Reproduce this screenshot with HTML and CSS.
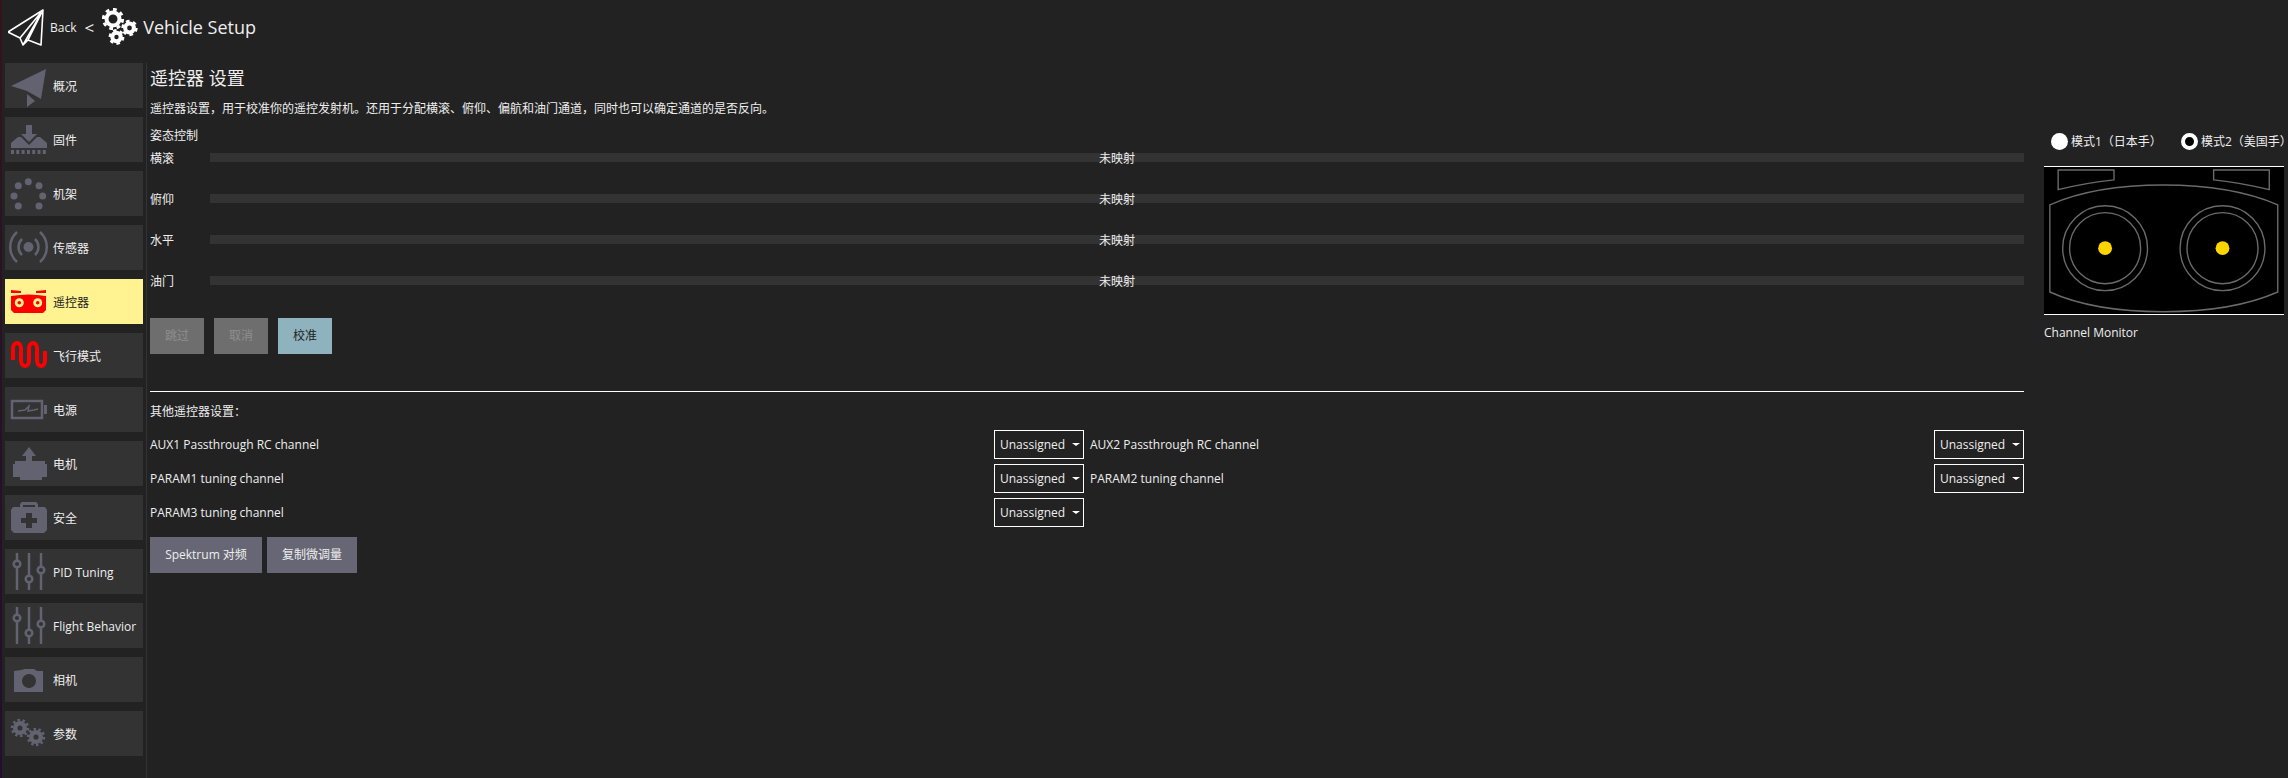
FILE: index.html
```html
<!DOCTYPE html>
<html lang="zh">
<head>
<meta charset="utf-8">
<title>Vehicle Setup</title>
<link rel="stylesheet" href="styles.css">
</head>
<body>
<div class="shell">
  <header class="topbar">
    <svg class="back-plane" viewBox="0 0 40 40"><path class="outline" d="M35 1 0 23l12 6 3 7 5-5 13 5ZM12 29 35 1 15 36M20 31 35 1"/></svg>
    <span class="back">Back</span>
    <span class="crumb">&lt;</span>
    <svg class="gears" viewBox="0 0 38 38">
      <g class="gear-white">
        <circle class="ring" cx="11" cy="11" r="6.5"/><circle class="teeth" cx="11" cy="11" r="9.6" pathLength="32"/>
        <circle class="ring" cx="27.5" cy="20" r="4.4"/><circle class="teeth small" cx="27.5" cy="20" r="7" pathLength="24"/>
        <circle class="ring" cx="14.5" cy="29" r="4.2"/><circle class="teeth small" cx="14.5" cy="29" r="6.7" pathLength="24"/>
      </g>
    </svg>
    <span class="page-title">Vehicle Setup</span>
  </header>
  <div class="body">
    <nav class="sidebar">
      <a class="nav-item"><svg class="nav-icon" viewBox="0 0 40 45"><path class="fill" d="M41 6 6 23l16 5 14 8Z"/><path class="fill" d="M22 31v13l8-6Z"/></svg><span>概况</span></a>
      <a class="nav-item"><svg class="nav-icon" viewBox="0 0 40 45"><path class="fill" d="M21 8h6v9h5l-8 8-8-8h5Z"/><path class="fill" d="M6 31v-5l7-6h3l8 8 8-8h3l7 6v5Z"/><path class="dots" d="M6 35h36"/></svg><span>固件</span></a>
      <a class="nav-item"><svg class="nav-icon" viewBox="0 0 40 45"><g class="fill"><circle cx="23.3" cy="10.7" r="3.5"/><circle cx="13.3" cy="14.7" r="3.5"/><circle cx="34" cy="14.7" r="3.5"/><circle cx="9" cy="25" r="3.5"/><circle cx="37.7" cy="25" r="3.5"/><circle cx="13.3" cy="35" r="3.5"/><circle cx="34" cy="35" r="3.5"/></g></svg><span>机架</span></a>
      <a class="nav-item"><svg class="nav-icon" viewBox="0 0 40 45"><circle class="fill" cx="23.5" cy="22" r="5"/><path class="line" d="M17 14a11 11 0 0 0 0 16M30 14a11 11 0 0 1 0 16M12 7a20 20 0 0 0 0 30M35 7a20 20 0 0 1 0 30"/></svg><span>传感器</span></a>
      <a class="nav-item active"><svg class="nav-icon" viewBox="0 0 40 45"><path class="red" d="M6 11l10 1v2H6ZM31 12l10-1v3H31Z"/><path class="red" d="M6 17q18-3 35 0v14l-3 3H9l-3-3Z"/><circle class="eye" cx="14.300" cy="23.700" r="4.500"/><circle class="red" cx="14.300" cy="23.700" r="1.800"/><circle class="eye" cx="32.700" cy="23.700" r="4.500"/><circle class="red" cx="32.700" cy="23.700" r="1.800"/></svg><span>遥控器</span></a>
      <a class="nav-item"><svg class="nav-icon" viewBox="0 0 40 45"><path class="wave" d="M8 27V16c0-8 8-8 8 0v11c0 8 8 8 8 0V16c0-8 8-8 8 0v11c0 8 8 8 8 0v-9"/></svg><span>飞行模式</span></a>
      <a class="nav-item"><svg class="nav-icon" viewBox="0 0 40 45"><path class="line" d="M7 14h30v17H7Z"/><path class="fill" d="M39 18h3v9h-3Z"/><path class="thin" d="M13 24l7-1 4-4-1 5 6-1 4-1"/></svg><span>电源</span></a>
      <a class="nav-item"><svg class="nav-icon" viewBox="0 0 40 45"><path class="fill" d="M24 6l7 9h-4v5h13v3h2v13h-5v3H15v-3H8V23h2v-3h11v-5h-4Z"/></svg><span>电机</span></a>
      <a class="nav-item"><svg class="nav-icon" viewBox="0 0 40 45"><path class="fill" fill-rule="evenodd" d="M15 12V9l2-2h14l2 2v3h7l2 3v20l-3 3H9l-3-3V15l2-3Zm3 0h12V10H18Zm3 6v5h-5v5h5v5h6v-5h5v-5h-5v-5Z"/></svg><span>安全</span></a>
      <a class="nav-item"><svg class="nav-icon" viewBox="0 0 40 45"><path class="line" d="M12 4v37M24 4v37M36 4v37"/><g class="knob"><circle cx="12" cy="15" r="3.300"/><circle cx="24" cy="30" r="3.300"/><circle cx="36" cy="21" r="3.300"/></g></svg><span>PID Tuning</span></a>
      <a class="nav-item"><svg class="nav-icon" viewBox="0 0 40 45"><path class="line" d="M12 4v37M24 4v37M36 4v37"/><g class="knob"><circle cx="12" cy="15" r="3.300"/><circle cx="24" cy="30" r="3.300"/><circle cx="36" cy="21" r="3.300"/></g></svg><span>Flight Behavior</span></a>
      <a class="nav-item"><svg class="nav-icon" viewBox="0 0 40 45"><path class="fill" fill-rule="evenodd" d="M9 14l7-1 4-1h9l3 2h6v21H9Zm15 3a7 7 0 1 0 .01 0Z"/></svg><span>相机</span></a>
      <a class="nav-item"><svg class="nav-icon" viewBox="0 0 40 45"><circle class="gear-ring" cx="15" cy="17" r="4.800"/><circle class="gear-teeth" cx="15" cy="17" r="8" pathLength="40"/><circle class="gear-ring" cx="31" cy="26" r="4.800"/><circle class="gear-teeth" cx="31" cy="26" r="8" pathLength="40"/></svg><span>参数</span></a>
    </nav>
    <main class="main">
      <h1 class="heading">遥控器 设置</h1>
      <p class="intro">遥控器设置，用于校准你的遥控发射机。还用于分配横滚、俯仰、偏航和油门通道，同时也可以确定通道的是否反向。</p>
      <p class="group-label">姿态控制</p>
      <div class="bars">
        <div class="bar-row"><span class="bar-label">横滚</span><div class="bar">未映射</div></div>
        <div class="bar-row"><span class="bar-label">俯仰</span><div class="bar">未映射</div></div>
        <div class="bar-row"><span class="bar-label">水平</span><div class="bar">未映射</div></div>
        <div class="bar-row"><span class="bar-label">油门</span><div class="bar">未映射</div></div>
      </div>
      <div class="cal-actions">
        <button class="btn disabled">跳过</button>
        <button class="btn disabled">取消</button>
        <button class="btn primary">校准</button>
      </div>
      <hr class="rule">
      <p class="other-label">其他遥控器设置：</p>
      <div class="options">
        <div class="option"><span>AUX1 Passthrough RC channel</span><div class="select">Unassigned<i class="caret"></i></div></div>
        <div class="option"><span>AUX2 Passthrough RC channel</span><div class="select">Unassigned<i class="caret"></i></div></div>
        <div class="option"><span>PARAM1 tuning channel</span><div class="select">Unassigned<i class="caret"></i></div></div>
        <div class="option"><span>PARAM2 tuning channel</span><div class="select">Unassigned<i class="caret"></i></div></div>
        <div class="option"><span>PARAM3 tuning channel</span><div class="select">Unassigned<i class="caret"></i></div></div>
      </div>
      <div class="extra-actions">
        <button class="btn secondary wide">Spektrum 对频</button>
        <button class="btn secondary narrow">复制微调量</button>
      </div>
    </main>
    <aside class="monitor">
      <div class="modes">
        <label class="mode"><i class="radio"></i>模式1（日本手）</label>
        <label class="mode"><i class="radio checked"></i>模式2（美国手）</label>
      </div>
      <svg class="sticks" viewBox="0 0 240 149">
        <path class="stick-line" d="M12.700 3H69.300V13Q40 16 12.700 23ZM226.700 3H170.300V13Q199 16 226.700 23ZM4.300 38.300Q50 18.300 119.300 18.300T235.300 38.300V126.700Q190 146.700 119.300 146.700T4.300 126.700Z"/>
        <circle class="stick-line" cx="60.300" cy="82.300" r="43"/><circle class="stick-line" cx="60.300" cy="82.300" r="36"/>
        <circle class="stick-line" cx="179.300" cy="82.300" r="43"/><circle class="stick-line" cx="179.300" cy="82.300" r="36"/>
        <circle class="stick-dot" cx="60.300" cy="82.300" r="7"/><circle class="stick-dot" cx="179.300" cy="82.300" r="7"/>
      </svg>
      <p class="monitor-label">Channel Monitor</p>
    </aside>
  </div>
</div>
</body>
</html>
```

FILE: styles.css
```css
* { box-sizing: border-box; }
html, body { margin: 0; height: 100%; }
body {
  background: #222;
  color: #eee;
  font: 12px/16px "Open Sans", "Noto Sans CJK SC", sans-serif;
  overflow: hidden;
}
.shell {
  height: 778px;
  border-left: 2px solid;
  border-image: linear-gradient(#33141a, #261029 60%, #240e30) 1;
  display: flex;
  flex-direction: column;
}
.topbar { height: 63px; display: flex; align-items: flex-start; }
.back-plane { width: 40px; height: 40px; margin: 9px 0 0 6px; flex: none; }
.outline { fill: none; stroke: #fff; stroke-width: 1.6; stroke-linejoin: round; }
.back { margin: 20px 0 0 2px; }
.crumb { margin: 17px 0 0 8px; font-size: 17px; line-height: 22px; }
.gears { width: 38px; height: 38px; margin: 8px 0 0 8px; flex: none; }
.ring { fill: none; stroke: #fff; stroke-width: 4; }
.teeth { fill: none; stroke: #fff; stroke-width: 3; stroke-dasharray: 2 2; }
.teeth.small { stroke-dasharray: 2 2; stroke-width: 2.4; }
.page-title { margin: 15px 0 0 3px; font-size: 18px; line-height: 25px; }
.body { flex: 1; display: flex; min-height: 0; }
.sidebar {
  width: 144px;
  padding-left: 3px;
  flex: none;
  display: flex;
  flex-direction: column;
  gap: 9px;
}
.nav-item {
  width: 138px;
  height: 45px;
  flex: none;
  background: #333;
  display: flex;
  align-items: center;
  color: #eee;
}
.nav-item span { position: relative; left: 8px; top: 1px; }
.nav-item.active { background: #fff291; color: #222; }
.nav-icon { width: 40px; height: 45px; flex: none; overflow: visible; }
.fill { fill: #626270; }
.line { fill: none; stroke: #626270; stroke-width: 2.500; }
.thin { fill: none; stroke: #626270; stroke-width: 1.500; }
.dots { fill: none; stroke: #626270; stroke-width: 4; stroke-dasharray: 3 2.300; }
.knob circle { fill: #333; stroke: #626270; stroke-width: 2.500; }
.red { fill: #f00; }
.eye { fill: #fff291; }
.wave { fill: none; stroke: #f00; stroke-width: 4; }
.gear-ring { fill: none; stroke: #626270; stroke-width: 4.500; }
.gear-teeth { fill: none; stroke: #626270; stroke-width: 2.500; stroke-dasharray: 2 2; }
.main {
  width: 1878px;
  flex: none;
  border-left: 1px solid #333;
  padding-left: 3px;
}
.heading { margin: 5px 0 0; font-size: 18px; line-height: 20px; font-weight: 400; }
.intro { margin: 13px 0 0; }
.group-label { margin: 11px 0 0; }
.bars { margin-top: 8px; display: flex; flex-direction: column; gap: 24px; }
.bar-row { display: flex; align-items: flex-start; height: 17px; }
.bar-label { width: 60px; flex: none; line-height: 14px; }
.bar {
  flex: 1;
  height: 9px;
  margin-top: 1px;
  background: #333;
  text-align: center;
  line-height: 11px;
}
.cal-actions { display: flex; gap: 10px; margin-top: 26px; }
.btn {
  height: 36px;
  width: 54px;
  border: 0;
  padding: 0;
  font: inherit;
  color: #eee;
}
.btn.disabled { background: #6e6e6e; color: #8f8f8f; }
.btn.primary { background: #8fb3be; color: #222; }
.btn.secondary { background: #666674; }
.btn.wide { width: 112px; }
.btn.narrow { width: 90px; }
.rule { margin: 37px 0 0; border: 0; height: 1px; background: #fff; }
.other-label { margin: 12px 0 0; }
.options {
  margin-top: 10px;
  display: grid;
  grid-template-columns: 934px 934px;
  column-gap: 6px;
  row-gap: 5px;
}
.option { display: flex; justify-content: space-between; align-items: center; height: 29px; }
.select {
  width: 90px;
  height: 29px;
  border: 1px solid #fff;
  display: flex;
  align-items: center;
  padding-left: 5px;
  gap: 7px;
}
.caret {
  width: 0;
  height: 0;
  border: 3px solid transparent;
  border-top: 3px solid #fff;
  border-bottom: 0;
  border-left-width: 4px;
  border-right-width: 4px;
}
.extra-actions { display: flex; gap: 5px; margin-top: 10px; }
.monitor { margin-left: 20px; width: 244px; flex: none; }
.modes { display: flex; gap: 26px; margin: 70px 0 0 7px; white-space: nowrap; }
.mode { display: flex; align-items: center; gap: 3px; width: 104px; flex: none; }
.radio { width: 17px; height: 17px; border-radius: 50%; background: #fff; flex: none; }
.radio.checked { background: #000; border: 4px solid #fff; }
.sticks {
  display: block;
  width: 240px;
  height: 149px;
  margin-top: 16px;
  background: #000;
  border-top: 1px solid #fff;
  border-bottom: 1px solid #fff;
}
.stick-line { fill: none; stroke: #6a6a6a; stroke-width: 1.400; }
.stick-dot { fill: #ffd500; }
.monitor-label { margin: 10px 0 0; }
```
